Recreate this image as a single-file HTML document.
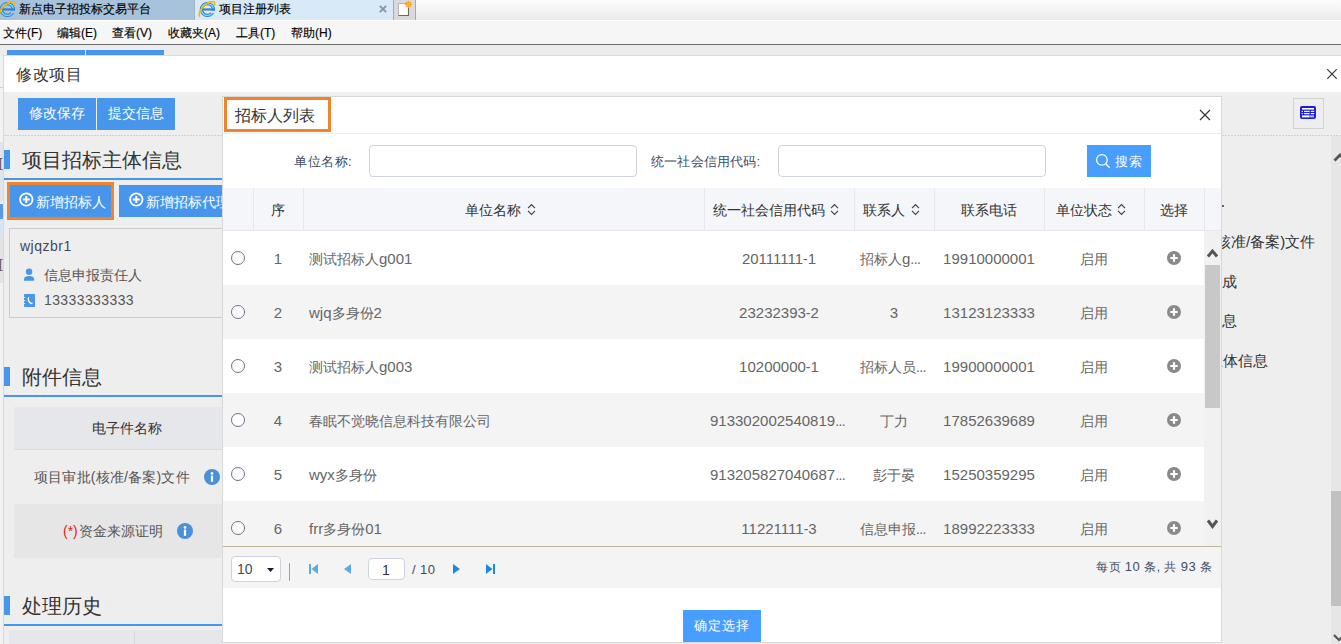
<!DOCTYPE html>
<html><head><meta charset="utf-8">
<style>
*{box-sizing:border-box;margin:0;padding:0}
html,body{width:1341px;height:644px;overflow:hidden;background:#eeeeee;font-family:"Liberation Sans",sans-serif;color:#333;position:relative}
.a{position:absolute}
.t{position:absolute;white-space:nowrap;line-height:1}
.n{font-size:15px}
</style></head><body>
<div class="a" style="left:0px;top:0px;width:1341px;height:20px;background:linear-gradient(#fcfcfc,#ebebeb)"></div>
<div class="a" style="left:0px;top:0px;width:194px;height:20px;background:#a7c3dc"></div>
<div class="a" style="left:194px;top:0px;width:199px;height:20px;background:#d8e9f8;border-left:1px solid #9fb3c6"></div>
<div class="a" style="left:393px;top:0px;width:23px;height:20px;background:#dadada;border-left:1px solid #a9a9a9;border-right:1px solid #a9a9a9"></div>
<svg class="a" style="left:-2px;top:1px" width="18" height="17" viewBox="0 0 18 17"><ellipse cx="9.4" cy="8.5" rx="6" ry="5.9" fill="none" stroke="#2c82cc" stroke-width="3.3"/><ellipse cx="9.4" cy="8.5" rx="6" ry="5.9" fill="none" stroke="#86d6f6" stroke-width="1.3"/><rect x="12.8" y="9.8" width="6" height="2.2" fill="#a7c3dc"/><rect x="4.2" y="7.4" width="12" height="2.1" fill="#2c82cc"/><path d="M1.8 15.6C-0.2 12.5 4 5 9.5 2.2S17.2-0.6 16.6 4.4" fill="none" stroke="#f7b500" stroke-width="1.7"/></svg>
<svg class="a" style="left:198px;top:1px" width="18" height="17" viewBox="0 0 18 17"><ellipse cx="9.4" cy="8.5" rx="6" ry="5.9" fill="none" stroke="#2c82cc" stroke-width="3.3"/><ellipse cx="9.4" cy="8.5" rx="6" ry="5.9" fill="none" stroke="#86d6f6" stroke-width="1.3"/><rect x="12.8" y="9.8" width="6" height="2.2" fill="#d8e9f8"/><rect x="4.2" y="7.4" width="12" height="2.1" fill="#2c82cc"/><path d="M1.8 15.6C-0.2 12.5 4 5 9.5 2.2S17.2-0.6 16.6 4.4" fill="none" stroke="#f7b500" stroke-width="1.7"/></svg>
<svg class="a" style="left:397px;top:0px" width="17" height="17" viewBox="0 0 17 17"><rect x="1.5" y="3.5" width="10" height="12" fill="#fdfdfd" stroke="#b5b5b5" stroke-width="1"/><path d="M1.5 15.5h10.5M11.5 6v9.5" stroke="#6a6a6a" stroke-width="1.1"/><path d="M11.4 0.8v7.2M7.8 4.4h7.2M8.9 1.9l5 5M13.9 1.9l-5 5" stroke="#f2a01e" stroke-width="1.3"/><circle cx="11.4" cy="4.4" r="1.6" fill="#f7b733"/></svg>
<div class="t" style="left:19px;top:3px;font-size:12px;color:#000;-webkit-text-stroke:0.15px #000">新点电子招投标交易平台</div>
<div class="t" style="left:219px;top:3px;font-size:12px;color:#000;-webkit-text-stroke:0.15px #000">项目注册列表</div>
<svg class="a" style="left:379px;top:5px" width="8" height="8" viewBox="0 0 8 8"><path d="M0.8 0.8l6.4 6.4M7.2 0.8l-6.4 6.4" stroke="#8796a3" stroke-width="1.9"/></svg>
<div class="a" style="left:0px;top:20px;width:1341px;height:24px;background:#f6f6f6;border-top:1px solid #fff"></div>
<div class="a" style="left:0px;top:44px;width:1341px;height:1px;background:#6d6d6d"></div>
<div class="t" style="left:3px;top:27px;font-size:12px;color:#000;-webkit-text-stroke:0.15px #000">文件(F)</div>
<div class="t" style="left:57px;top:27px;font-size:12px;color:#000;-webkit-text-stroke:0.15px #000">编辑(E)</div>
<div class="t" style="left:112px;top:27px;font-size:12px;color:#000;-webkit-text-stroke:0.15px #000">查看(V)</div>
<div class="t" style="left:168px;top:27px;font-size:12px;color:#000;-webkit-text-stroke:0.15px #000">收藏夹(A)</div>
<div class="t" style="left:236px;top:27px;font-size:12px;color:#000;-webkit-text-stroke:0.15px #000">工具(T)</div>
<div class="t" style="left:291px;top:27px;font-size:12px;color:#000;-webkit-text-stroke:0.15px #000">帮助(H)</div>
<div class="a" style="left:0px;top:45px;width:1341px;height:11px;background:#ececec"></div>
<div class="a" style="left:7px;top:50px;width:78px;height:6px;background:#4896ec"></div>
<div class="a" style="left:86px;top:50px;width:78px;height:6px;background:#4896ec"></div>
<div class="a" style="left:0px;top:56px;width:3px;height:588px;background:#f2f2f2"></div>
<div class="a" style="left:0px;top:142px;width:3px;height:60px;background:#e0e5ec"></div>
<div class="a" style="left:0px;top:87px;width:3px;height:1px;background:#c6d2ea"></div>
<div class="a" style="left:0px;top:204px;width:3px;height:15px;background:#5a9ae4"></div>
<div class="a" style="left:0px;top:219px;width:3px;height:17px;background:#d6e4f4"></div>
<div class="a" style="left:0px;top:236px;width:3px;height:47px;background:#e3e3e3"></div>
<div class="t" style="left:-1px;top:156px;font-size:13px;color:#555;">[</div>
<div class="t" style="left:-1px;top:257px;font-size:13px;color:#555;">[</div>
<div class="a" style="left:3px;top:55px;width:1338px;height:589px;background:#eeeeee;border-left:1px solid #d9d9d9;border-top:1px solid #dddddd"></div>
<div class="a" style="left:4px;top:56px;width:1337px;height:36px;background:#fff"></div>
<div class="t" style="left:16px;top:67px;font-size:16px;color:#333;letter-spacing:0.5px">修改项目</div>
<svg class="a" style="left:1327px;top:69px" width="10" height="10" viewBox="0 0 10 10"><path d="M0.3 0.3l9.4 9.4M9.7 0.3l-9.4 9.4" stroke="#333" stroke-width="1.15"/></svg>
<div class="a" style="left:18px;top:98px;width:78px;height:32px;background:#4896ec"></div>
<div class="a" style="left:97px;top:98px;width:78px;height:32px;background:#4896ec"></div>
<div class="t" style="left:29px;top:106px;font-size:14px;color:#fff;">修改保存</div>
<div class="t" style="left:108px;top:106px;font-size:14px;color:#fff;">提交信息</div>
<div class="a" style="left:4px;top:135px;width:1337px;height:1px;background:repeating-linear-gradient(90deg,#c6d2ea 0 2px,transparent 2px 3px)"></div>
<div class="a" style="left:4px;top:150px;width:6px;height:19px;background:#4896ec"></div>
<div class="t" style="left:22px;top:150px;font-size:20px;color:#333;">项目招标主体信息</div>
<div class="a" style="left:4px;top:178px;width:218px;height:2px;background:#4896ec"></div>
<div class="a" style="left:7px;top:182px;width:107px;height:38px;border:3px solid #f0842c"></div>
<div class="a" style="left:10px;top:185px;width:101px;height:32px;background:#4896ec"></div>
<div class="a" style="left:119px;top:185px;width:103px;height:32px;background:#4896ec"></div>
<svg class="a" style="left:19px;top:192px" width="15" height="15" viewBox="0 0 15 15"><circle cx="7.3" cy="7.5" r="6.2" fill="none" stroke="#fff" stroke-width="1.8"/><path d="M7.3 4v7M3.8 7.5h7" stroke="#fff" stroke-width="2"/></svg>
<div class="t" style="left:36px;top:195px;font-size:14px;color:#fff;">新增招标人</div>
<svg class="a" style="left:129px;top:192px" width="15" height="15" viewBox="0 0 15 15"><circle cx="7.3" cy="7.5" r="6.2" fill="none" stroke="#fff" stroke-width="1.8"/><path d="M7.3 4v7M3.8 7.5h7" stroke="#fff" stroke-width="2"/></svg>
<div class="t" style="left:146px;top:195px;font-size:14px;color:#fff;">新增招标代理</div>
<div class="a" style="left:9px;top:228px;width:230px;height:90px;border:1px solid #cccccc"></div>
<div class="t" style="left:20px;top:239px;font-size:14px;color:#3d4a5f;letter-spacing:0.5px">wjqzbr1</div>
<svg class="a" style="left:24px;top:268px" width="11" height="13" viewBox="0 0 11 13"><circle cx="5.1" cy="3.8" r="3.2" fill="#4896ec"/><path d="M0 12.8v-1.6C0 9.2 2.2 8 5.1 8s5.1 1.2 5.1 3.2v1.6z" fill="#4896ec"/></svg>
<div class="t" style="left:44px;top:268px;font-size:14px;color:#555;">信息申报责任人</div>
<svg class="a" style="left:24px;top:294px" width="11" height="13" viewBox="0 0 11 13"><rect width="11" height="13" rx="1" fill="#4896ec"/><path d="M5 3.2C3.6 4.4 4.2 8 7.2 9.6l1.3-.7" fill="none" stroke="#fff" stroke-width="1.3"/><path d="M0 3.5h1.2M0 6.5h1.2M0 9.5h1.2" stroke="#fff" stroke-width="0.8"/></svg>
<div class="t" style="left:44px;top:293px;font-size:14px;color:#555;letter-spacing:0.4px">13333333333</div>
<div class="a" style="left:4px;top:367px;width:6px;height:19px;background:#4896ec"></div>
<div class="t" style="left:22px;top:367px;font-size:20px;color:#333;">附件信息</div>
<div class="a" style="left:4px;top:395px;width:218px;height:2px;background:#4896ec"></div>
<div class="a" style="left:14px;top:407px;width:208px;height:43px;background:#e6e7eb;border-bottom:1px solid #dcdde2"></div>
<div class="t" style="left:92px;top:421px;font-size:14px;color:#333;">电子件名称</div>
<div class="t" style="left:34px;top:470px;font-size:14px;color:#555;letter-spacing:0.2px">项目审批(核准/备案)文件</div>
<svg class="a" style="left:204px;top:469px" width="16" height="16" viewBox="0 0 16 16"><circle cx="8" cy="8" r="8" fill="#4a90d9"/><circle cx="8" cy="4.4" r="1.3" fill="#fff"/><rect x="6.9" y="6.6" width="2.2" height="6.2" fill="#fff"/></svg>
<div class="a" style="left:14px;top:504px;width:208px;height:54px;background:#e6e6e6"></div>
<div class="t" style="left:63px;top:524px;font-size:14px;color:#e02020;">(*)</div>
<div class="t" style="left:79px;top:524px;font-size:14px;color:#555;">资金来源证明</div>
<svg class="a" style="left:177px;top:523px" width="16" height="16" viewBox="0 0 16 16"><circle cx="8" cy="8" r="8" fill="#4a90d9"/><circle cx="8" cy="4.4" r="1.3" fill="#fff"/><rect x="6.9" y="6.6" width="2.2" height="6.2" fill="#fff"/></svg>
<div class="a" style="left:4px;top:596px;width:6px;height:19px;background:#4896ec"></div>
<div class="t" style="left:22px;top:596px;font-size:20px;color:#333;">处理历史</div>
<div class="a" style="left:4px;top:624px;width:218px;height:2px;background:#4896ec"></div>
<div class="a" style="left:9px;top:630px;width:213px;height:14px;background:#e6e7eb"></div>
<div class="a" style="left:134px;top:631px;width:1px;height:13px;background:#d8d8d8"></div>
<div class="a" style="left:1293px;top:98px;width:31px;height:31px;border:1px solid #d2d2d2"></div>
<svg class="a" style="left:1300px;top:106px" width="16" height="13" viewBox="0 0 16 13"><rect x="0" y="0" width="16" height="13" rx="2" fill="#1c1ce6"/><rect x="2" y="2" width="12" height="1.6" fill="#fff"/><rect x="1.6" y="4.8" width="1.2" height="1.2" fill="#fff"/><rect x="4" y="4.8" width="5.6" height="1.2" fill="#fff"/><rect x="10.8" y="4.8" width="3.4" height="1.2" fill="#fff"/><rect x="1.6" y="7" width="1.2" height="1.2" fill="#fff"/><rect x="4" y="7" width="5.6" height="1.2" fill="#fff"/><rect x="10.8" y="7" width="3.4" height="1.2" fill="#fff"/><rect x="2" y="9.4" width="7.6" height="2" fill="#fff"/><rect x="10" y="9.4" width="4" height="2" fill="#b9bbf5"/></svg>
<div class="t" style="left:1216px;top:234px;font-size:15px;color:#333;">核准/备案)文件</div>
<div class="a" style="left:1222px;top:205px;width:2px;height:2px;background:#666"></div>
<div class="t" style="left:1207px;top:274px;font-size:15px;color:#333;">生成</div>
<div class="t" style="left:1207px;top:313px;font-size:15px;color:#333;">信息</div>
<div class="t" style="left:1208px;top:353px;font-size:15px;color:#333;">主体信息</div>
<div class="a" style="left:1331px;top:136px;width:10px;height:508px;background:#e6e6e6"></div>
<div class="a" style="left:1331px;top:491px;width:10px;height:115px;background:#c1c1c1"></div>
<svg class="a" style="left:1333px;top:151px" width="10" height="12" viewBox="0 0 10 12"><path d="M1.5 9.5L7 4l5 5" fill="none" stroke="#555" stroke-width="2.8"/></svg>
<svg class="a" style="left:1333px;top:633px" width="10" height="10" viewBox="0 0 10 10"><path d="M1 2l5 5 5-5" fill="none" stroke="#555" stroke-width="2.2"/></svg>
<div class="a" style="left:222px;top:96px;width:1000px;height:547px;background:#fff;border:1px solid #d8d8d8"></div>
<div class="a" style="left:223px;top:133px;width:998px;height:1px;background:#ececec"></div>
<div class="a" style="left:224px;top:97px;width:107px;height:35px;border:3px solid #f0842c"></div>
<div class="t" style="left:235px;top:108px;font-size:16px;color:#333;">招标人列表</div>
<svg class="a" style="left:1199px;top:109px" width="12" height="12" viewBox="0 0 12 12"><path d="M1 1l10 10M11 1l-10 10" stroke="#333" stroke-width="1.1"/></svg>
<div class="t" style="left:294px;top:155px;font-size:13px;color:#3d4b66;letter-spacing:0.5px">单位名称:</div>
<div class="a" style="left:369px;top:145px;width:268px;height:32px;border:1px solid #cfd3da;border-radius:4px"></div>
<div class="t" style="left:651px;top:155px;font-size:13px;color:#3d4b66;letter-spacing:0.2px">统一社会信用代码:</div>
<div class="a" style="left:778px;top:145px;width:268px;height:32px;border:1px solid #cfd3da;border-radius:4px"></div>
<div class="a" style="left:1087px;top:145px;width:64px;height:32px;background:#479eff"></div>
<svg class="a" style="left:1095px;top:153px" width="16" height="16" viewBox="0 0 16 16"><circle cx="6.9" cy="6.9" r="5.3" fill="none" stroke="#fff" stroke-width="1.3"/><path d="M10.7 10.7l4 4" stroke="#fff" stroke-width="1.4"/></svg>
<div class="t" style="left:1115px;top:155px;font-size:13px;color:#fff;letter-spacing:0.5px">搜索</div>
<div class="a" style="left:223px;top:188px;width:998px;height:43px;background:#f4f6fa;border-bottom:1px solid #e6e8ec"></div>
<div class="a" style="left:253px;top:188px;width:1px;height:42px;background:#e6e8ec"></div>
<div class="a" style="left:303px;top:188px;width:1px;height:42px;background:#e6e8ec"></div>
<div class="a" style="left:704px;top:188px;width:1px;height:42px;background:#e6e8ec"></div>
<div class="a" style="left:854px;top:188px;width:1px;height:42px;background:#e6e8ec"></div>
<div class="a" style="left:934px;top:188px;width:1px;height:42px;background:#e6e8ec"></div>
<div class="a" style="left:1044px;top:188px;width:1px;height:42px;background:#e6e8ec"></div>
<div class="a" style="left:1144px;top:188px;width:1px;height:42px;background:#e6e8ec"></div>
<div class="a" style="left:1204px;top:188px;width:1px;height:42px;background:#e6e8ec"></div>
<div class="t" style="left:271px;top:203px;font-size:14px;color:#333;">序</div>
<div class="t" style="left:465px;top:203px;font-size:14px;color:#333;">单位名称</div>
<svg class="a" style="left:527px;top:203px" width="9" height="13" viewBox="0 0 9 13"><path d="M1 5.2L4.5 1.6 8 5.2M1 7.8L4.5 11.4 8 7.8" fill="none" stroke="#3a3a3a" stroke-width="1.05"/></svg>
<div class="t" style="left:713px;top:203px;font-size:14px;color:#333;">统一社会信用代码</div>
<svg class="a" style="left:830px;top:203px" width="9" height="13" viewBox="0 0 9 13"><path d="M1 5.2L4.5 1.6 8 5.2M1 7.8L4.5 11.4 8 7.8" fill="none" stroke="#3a3a3a" stroke-width="1.05"/></svg>
<div class="t" style="left:863px;top:203px;font-size:14px;color:#333;">联系人</div>
<svg class="a" style="left:911px;top:203px" width="9" height="13" viewBox="0 0 9 13"><path d="M1 5.2L4.5 1.6 8 5.2M1 7.8L4.5 11.4 8 7.8" fill="none" stroke="#3a3a3a" stroke-width="1.05"/></svg>
<div class="t" style="left:961px;top:203px;font-size:14px;color:#333;">联系电话</div>
<div class="t" style="left:1056px;top:203px;font-size:14px;color:#333;">单位状态</div>
<svg class="a" style="left:1117px;top:203px" width="9" height="13" viewBox="0 0 9 13"><path d="M1 5.2L4.5 1.6 8 5.2M1 7.8L4.5 11.4 8 7.8" fill="none" stroke="#3a3a3a" stroke-width="1.05"/></svg>
<div class="t" style="left:1160px;top:203px;font-size:14px;color:#333;">选择</div>
<div class="a" style="left:223px;top:231px;width:981px;height:315px;overflow:hidden">
<div class="a" style="left:0;top:0px;width:981px;height:54px;background:#ffffff">
<div class="a" style="left:8px;top:20px;width:14px;height:14px;border:1px solid #6b7386;border-radius:50%;background:#fff"></div>
<div class="t" style="left:30px;width:50px;text-align:center;top:20px;font-size:14px;color:#666;line-height:16px"><span class="n">1</span></div>
<div class="t" style="left:86px;top:20px;font-size:14px;color:#666;line-height:16px">测试招标人<span class="n">g001</span></div>
<div class="t" style="left:481px;width:150px;text-align:center;top:20px;font-size:14px;color:#666;line-height:16px"><span class="n">20111111</span>-<span class="n">1</span></div>
<div class="t" style="left:637px;top:20px;font-size:14px;color:#666;line-height:16px">招标人<span class="n">g</span><span style="letter-spacing:-0.6px">...</span></div>
<div class="t" style="left:711px;width:110px;text-align:center;top:20px;font-size:14px;color:#666;line-height:16px"><span class="n">19910000001</span></div>
<div class="t" style="left:821px;width:100px;text-align:center;top:20px;font-size:14px;color:#666;line-height:16px">启用</div>
<svg class="a" style="left:944px;top:20px" width="14" height="14" viewBox="0 0 14 14"><circle cx="7" cy="7" r="7" fill="#8a8a8a"/><path d="M7 3.3v7.4M3.3 7h7.4" stroke="#fff" stroke-width="2.2"/></svg>
</div>
<div class="a" style="left:0;top:54px;width:981px;height:54px;background:#f4f4f4">
<div class="a" style="left:8px;top:20px;width:14px;height:14px;border:1px solid #6b7386;border-radius:50%;background:#fff"></div>
<div class="t" style="left:30px;width:50px;text-align:center;top:20px;font-size:14px;color:#666;line-height:16px"><span class="n">2</span></div>
<div class="t" style="left:86px;top:20px;font-size:14px;color:#666;line-height:16px"><span class="n">wjq</span>多身份<span class="n">2</span></div>
<div class="t" style="left:481px;width:150px;text-align:center;top:20px;font-size:14px;color:#666;line-height:16px"><span class="n">23232393</span>-<span class="n">2</span></div>
<div class="t" style="left:631px;width:80px;text-align:center;top:20px;font-size:14px;color:#666;line-height:16px"><span class="n">3</span></div>
<div class="t" style="left:711px;width:110px;text-align:center;top:20px;font-size:14px;color:#666;line-height:16px"><span class="n">13123123333</span></div>
<div class="t" style="left:821px;width:100px;text-align:center;top:20px;font-size:14px;color:#666;line-height:16px">启用</div>
<svg class="a" style="left:944px;top:20px" width="14" height="14" viewBox="0 0 14 14"><circle cx="7" cy="7" r="7" fill="#8a8a8a"/><path d="M7 3.3v7.4M3.3 7h7.4" stroke="#fff" stroke-width="2.2"/></svg>
</div>
<div class="a" style="left:0;top:108px;width:981px;height:54px;background:#ffffff">
<div class="a" style="left:8px;top:20px;width:14px;height:14px;border:1px solid #6b7386;border-radius:50%;background:#fff"></div>
<div class="t" style="left:30px;width:50px;text-align:center;top:20px;font-size:14px;color:#666;line-height:16px"><span class="n">3</span></div>
<div class="t" style="left:86px;top:20px;font-size:14px;color:#666;line-height:16px">测试招标人<span class="n">g003</span></div>
<div class="t" style="left:481px;width:150px;text-align:center;top:20px;font-size:14px;color:#666;line-height:16px"><span class="n">10200000</span>-<span class="n">1</span></div>
<div class="t" style="left:637px;top:20px;font-size:14px;color:#666;line-height:16px">招标人员<span style="letter-spacing:-0.6px">...</span></div>
<div class="t" style="left:711px;width:110px;text-align:center;top:20px;font-size:14px;color:#666;line-height:16px"><span class="n">19900000001</span></div>
<div class="t" style="left:821px;width:100px;text-align:center;top:20px;font-size:14px;color:#666;line-height:16px">启用</div>
<svg class="a" style="left:944px;top:20px" width="14" height="14" viewBox="0 0 14 14"><circle cx="7" cy="7" r="7" fill="#8a8a8a"/><path d="M7 3.3v7.4M3.3 7h7.4" stroke="#fff" stroke-width="2.2"/></svg>
</div>
<div class="a" style="left:0;top:162px;width:981px;height:54px;background:#f4f4f4">
<div class="a" style="left:8px;top:20px;width:14px;height:14px;border:1px solid #6b7386;border-radius:50%;background:#fff"></div>
<div class="t" style="left:30px;width:50px;text-align:center;top:20px;font-size:14px;color:#666;line-height:16px"><span class="n">4</span></div>
<div class="t" style="left:86px;top:20px;font-size:14px;color:#666;line-height:16px">春眠不觉晓信息科技有限公司</div>
<div class="t" style="left:487px;top:20px;font-size:14px;color:#666;line-height:16px"><span class="n">913302002540819</span><span style="letter-spacing:-0.6px">...</span></div>
<div class="t" style="left:631px;width:80px;text-align:center;top:20px;font-size:14px;color:#666;line-height:16px">丁力</div>
<div class="t" style="left:711px;width:110px;text-align:center;top:20px;font-size:14px;color:#666;line-height:16px"><span class="n">17852639689</span></div>
<div class="t" style="left:821px;width:100px;text-align:center;top:20px;font-size:14px;color:#666;line-height:16px">启用</div>
<svg class="a" style="left:944px;top:20px" width="14" height="14" viewBox="0 0 14 14"><circle cx="7" cy="7" r="7" fill="#8a8a8a"/><path d="M7 3.3v7.4M3.3 7h7.4" stroke="#fff" stroke-width="2.2"/></svg>
</div>
<div class="a" style="left:0;top:216px;width:981px;height:54px;background:#ffffff">
<div class="a" style="left:8px;top:20px;width:14px;height:14px;border:1px solid #6b7386;border-radius:50%;background:#fff"></div>
<div class="t" style="left:30px;width:50px;text-align:center;top:20px;font-size:14px;color:#666;line-height:16px"><span class="n">5</span></div>
<div class="t" style="left:86px;top:20px;font-size:14px;color:#666;line-height:16px"><span class="n">wyx</span>多身份</div>
<div class="t" style="left:487px;top:20px;font-size:14px;color:#666;line-height:16px"><span class="n">913205827040687</span><span style="letter-spacing:-0.6px">...</span></div>
<div class="t" style="left:631px;width:80px;text-align:center;top:20px;font-size:14px;color:#666;line-height:16px">彭于晏</div>
<div class="t" style="left:711px;width:110px;text-align:center;top:20px;font-size:14px;color:#666;line-height:16px"><span class="n">15250359295</span></div>
<div class="t" style="left:821px;width:100px;text-align:center;top:20px;font-size:14px;color:#666;line-height:16px">启用</div>
<svg class="a" style="left:944px;top:20px" width="14" height="14" viewBox="0 0 14 14"><circle cx="7" cy="7" r="7" fill="#8a8a8a"/><path d="M7 3.3v7.4M3.3 7h7.4" stroke="#fff" stroke-width="2.2"/></svg>
</div>
<div class="a" style="left:0;top:270px;width:981px;height:54px;background:#f4f4f4">
<div class="a" style="left:8px;top:20px;width:14px;height:14px;border:1px solid #6b7386;border-radius:50%;background:#fff"></div>
<div class="t" style="left:30px;width:50px;text-align:center;top:20px;font-size:14px;color:#666;line-height:16px"><span class="n">6</span></div>
<div class="t" style="left:86px;top:20px;font-size:14px;color:#666;line-height:16px"><span class="n">frr</span>多身份<span class="n">01</span></div>
<div class="t" style="left:481px;width:150px;text-align:center;top:20px;font-size:14px;color:#666;line-height:16px"><span class="n">11221111</span>-<span class="n">3</span></div>
<div class="t" style="left:637px;top:20px;font-size:14px;color:#666;line-height:16px">信息申报<span style="letter-spacing:-0.6px">...</span></div>
<div class="t" style="left:711px;width:110px;text-align:center;top:20px;font-size:14px;color:#666;line-height:16px"><span class="n">18992223333</span></div>
<div class="t" style="left:821px;width:100px;text-align:center;top:20px;font-size:14px;color:#666;line-height:16px">启用</div>
<svg class="a" style="left:944px;top:20px" width="14" height="14" viewBox="0 0 14 14"><circle cx="7" cy="7" r="7" fill="#8a8a8a"/><path d="M7 3.3v7.4M3.3 7h7.4" stroke="#fff" stroke-width="2.2"/></svg>
</div>
</div>
<div class="a" style="left:1204px;top:231px;width:17px;height:315px;background:#f1f1f1"></div>
<svg class="a" style="left:1207px;top:247px" width="11" height="11" viewBox="0 0 11 11"><path d="M1 9.5L5.5 4 10 9.5" fill="none" stroke="#555" stroke-width="3"/></svg>
<div class="a" style="left:1205px;top:265px;width:15px;height:143px;background:#c8c8c8"></div>
<svg class="a" style="left:1207px;top:519px" width="11" height="11" viewBox="0 0 11 11"><path d="M1 1.5L5.5 7.5 10 1.5" fill="none" stroke="#555" stroke-width="3"/></svg>
<div class="a" style="left:223px;top:546px;width:998px;height:1px;background:#bfb497"></div>
<div class="a" style="left:223px;top:547px;width:998px;height:41px;background:#f4f4f4"></div>
<div class="a" style="left:231px;top:556px;width:50px;height:26px;border:1px solid #cfd3da;border-radius:4px;background:#fff"></div>
<div class="t" style="left:237px;top:562px;font-size:14px;color:#3d4a5f;">10</div>
<svg class="a" style="left:267px;top:568px" width="7" height="4" viewBox="0 0 7 4"><path d="M0 0h7L3.5 4z" fill="#1a1a2e"/></svg>
<div class="a" style="left:289px;top:563px;width:1px;height:18px;background:#9aa3b0"></div>
<svg class="a" style="left:309px;top:564px" width="9" height="10" viewBox="0 0 9 10"><rect x="0" y="0" width="2" height="10" fill="#5aaae8"/><path d="M9 0v10L2.5 5z" fill="#5aaae8"/></svg>
<svg class="a" style="left:344px;top:564px" width="7" height="10" viewBox="0 0 7 10"><path d="M7 0v10L0 5z" fill="#5aaae8"/></svg>
<div class="a" style="left:368px;top:558px;width:37px;height:22px;border:1px solid #cfd3da;border-radius:4px;background:#fff"></div>
<div class="t" style="left:382px;top:563px;font-size:14px;color:#333;">1</div>
<div class="t" style="left:412px;top:563px;font-size:13px;color:#3d4a5f;letter-spacing:0.4px">/ 10</div>
<svg class="a" style="left:453px;top:564px" width="7" height="10" viewBox="0 0 7 10"><path d="M0 0v10L7 5z" fill="#1a8ae0"/></svg>
<svg class="a" style="left:486px;top:564px" width="9" height="10" viewBox="0 0 9 10"><path d="M0 0v10L6.5 5z" fill="#1a8ae0"/><rect x="7" y="0" width="2" height="10" fill="#1a8ae0"/></svg>
<div class="t" style="left:1096px;top:560px;font-size:12px;color:#3f4d68;letter-spacing:0.5px">每页 <span style="font-size:13px">10</span> 条, 共 <span style="font-size:13px">93</span> 条</div>
<div class="a" style="left:683px;top:610px;width:78px;height:32px;background:#479eff"></div>
<div class="t" style="left:694px;top:619px;font-size:13px;color:#fff;letter-spacing:0.9px">确定选择</div>
</body></html>
